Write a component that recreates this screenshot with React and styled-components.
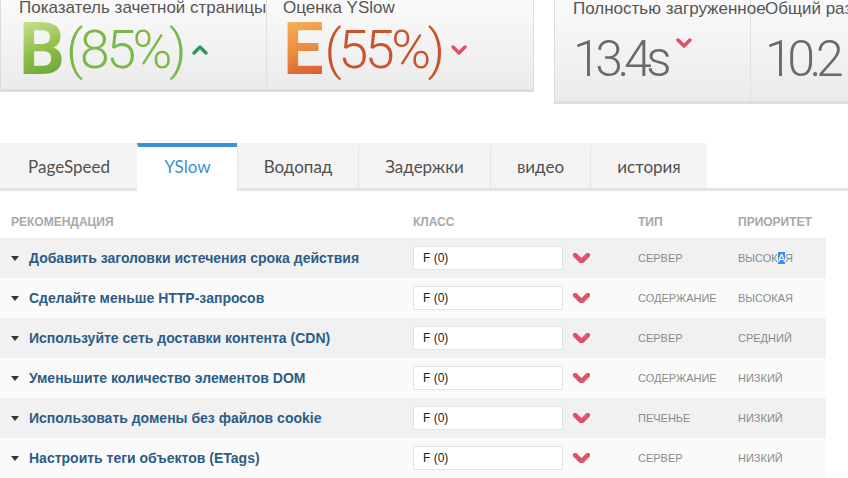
import React from "react";
import styled, { createGlobalStyle } from "styled-components";

const GlobalStyle = createGlobalStyle`
  html, body {
    margin: 0;
    padding: 0;
    background: #fff;
    overflow: hidden;
    font-family: "Liberation Sans", Arial, sans-serif;
  }
`;

const Page = styled.div`
  width: 848px;
  height: 478px;
  overflow: hidden;
`;

const ScoreRow = styled.div`
  display: flex;
  align-items: flex-start;
  gap: 20px;
  height: 104px;
`;

const Card = styled.div`
  display: flex;
  flex-shrink: 0;
  width: ${(p) => p.$width}px;
  height: ${(p) => p.$height}px;
  background: linear-gradient(#fafafa, #ebebeb);
  border: 1px solid #dcdcdc;
  border-top: none;
  border-bottom: 3px solid #dedede;
  box-sizing: border-box;
`;

const Cell = styled.div`
  width: ${(p) => p.$width}px;
  flex-shrink: 0;
  padding-left: ${(p) => p.$pad}px;
  box-sizing: border-box;
  border-right: ${(p) => (p.$divider ? "1px solid #e0e0e0" : "none")};
  white-space: nowrap;
`;

const CellTitle = styled.div`
  font-family: "Liberation Sans", Arial, sans-serif;
  font-size: 17px;
  line-height: 18px;
  margin-top: ${(p) => p.$top}px;
  color: #555;
`;

const Score = styled.div`
  display: flex;
  align-items: center;
  height: 60px;
  margin-top: ${(p) => p.$top}px;
`;

const Grade = styled.span`
  font-family: Roboto, "Open Sans", sans-serif;
  font-weight: 700;
  font-size: 72px;
  line-height: 60px;
  background: ${(p) => p.$gradient};
  -webkit-background-clip: text;
  background-clip: text;
  color: transparent;
`;

const Percent = styled.span`
  font-family: Roboto, "Open Sans", sans-serif;
  font-weight: 300;
  font-size: 54px;
  line-height: 60px;
  letter-spacing: -3.5px;
  margin-left: 1px;
  color: ${(p) => p.$color};
`;

const Timing = styled.span`
  font-family: Roboto, "Open Sans", sans-serif;
  font-weight: 300;
  font-size: 50px;
  line-height: 60px;
  letter-spacing: -5.5px;
  color: #6a6a6a;
`;

const Chevron = ({ up, color, size = 16, stroke = 3.5 }) => (
  <svg width={size} height={size * 0.62} viewBox="0 0 16 10">
    <polyline
      points={up ? "2,8 8,2 14,8" : "2,2 8,8 14,2"}
      fill="none"
      stroke={color}
      strokeWidth={stroke}
      strokeLinecap="round"
      strokeLinejoin="round"
    />
  </svg>
);

const Mark = styled.span`
  display: inline-flex;
  margin-left: ${(p) => p.$left}px;
  align-self: ${(p) => p.$align || "center"};
  margin-top: ${(p) => p.$top || 0}px;
`;

const TabBar = styled.div`
  display: flex;
  margin-top: 39px;
  height: 45px;
  border-bottom: 3px solid #e3e3e3;
`;

const Tab = styled.div`
  display: flex;
  align-items: center;
  justify-content: center;
  width: ${(p) => p.$width}px;
  box-sizing: border-box;
  font-family: Lato, "Open Sans", sans-serif;
  font-size: 17px;
  color: ${(p) => (p.$active ? "#3d8fd6" : "#505050")};
  background: ${(p) => (p.$active ? "#fff" : "#f4f4f4")};
  border-top: 4px solid ${(p) => (p.$active ? "#3d8fd6" : "#f4f4f4")};
  border-left: 1px solid ${(p) => (p.$active || p.$first ? "transparent" : "#e6e6e6")};
  height: ${(p) => (p.$active ? 48 : 45)}px;
  padding-bottom: ${(p) => (p.$active ? 5 : 2)}px;
`;

const Table = styled.div`
  width: 826px;
`;

const Grid = styled.div`
  display: grid;
  grid-template-columns: 402px 160px 65px 100px 88px;
  align-items: center;
  padding-left: 11px;
`;

const HeadRow = styled(Grid)`
  height: 47px;
  align-items: end;
  padding-bottom: 9px;
  box-sizing: border-box;
  font-size: 12px;
  line-height: 14px;
  font-weight: 700;
  color: #a8a8a8;
  text-transform: uppercase;
`;

const Row = styled(Grid)`
  height: 40px;
  background: ${(p) => (p.$odd ? "#f1f1f1" : "#fafafa")};
`;

const Rule = styled.div`
  display: flex;
  align-items: center;
  gap: 10px;
  font-size: 14px;
  font-weight: 700;
  color: #2b5d88;
  white-space: nowrap;
`;

const Caret = styled.span`
  width: 0;
  height: 0;
  border-left: 4px solid transparent;
  border-right: 4px solid transparent;
  border-top: 5px solid #333;
  margin-top: 1px;
`;

const GradeBox = styled.div`
  width: 150px;
  height: 24px;
  box-sizing: border-box;
  background: #fff;
  border: 1px solid #e2e2e2;
  padding-left: 9px;
  font-size: 12px;
  line-height: 22px;
  color: #222;
`;

const Small = styled.div`
  font-size: 11px;
  color: #8a8a8a;
  text-transform: uppercase;
  white-space: nowrap;
`;

const Selected = styled.span`
  background: #3c8ee3;
  color: #fff;
`;

const rules = [
  { name: "Добавить заголовки истечения срока действия", type: "сервер", prio: "высокая", sel: true },
  { name: "Сделайте меньше HTTP-запросов", type: "содержание", prio: "высокая" },
  { name: "Используйте сеть доставки контента (CDN)", type: "сервер", prio: "средний" },
  { name: "Уменьшите количество элементов DOM", type: "содержание", prio: "низкий" },
  { name: "Использовать домены без файлов cookie", type: "печенье", prio: "низкий" },
  { name: "Настроить теги объектов (ETags)", type: "сервер", prio: "низкий" },
];

const tabs = [
  { label: "PageSpeed", width: 137 },
  { label: "YSlow", width: 100, active: true },
  { label: "Водопад", width: 121 },
  { label: "Задержки", width: 132 },
  { label: "видео", width: 100 },
  { label: "история", width: 117 },
];

const Priority = ({ text, sel }) =>
  sel ? (
    <Small>
      ВЫСОК<Selected>А</Selected>Я
    </Small>
  ) : (
    <Small>{text}</Small>
  );

export default function App() {
  return (
    <Page>
      <GlobalStyle />
      <ScoreRow>
        <Card $width={534} $height={92}>
          <Cell $width={266} $pad={18} $divider>
            <CellTitle $top={-1}>Показатель зачетной страницы</CellTitle>
            <Score $top={3}>
              <Grade $gradient="linear-gradient(160deg, #cfe392 0%, #8fc04a 50%, #5e9f2e 100%)">B</Grade>
              <Percent $color="#7bb84a">(85%)</Percent>
              <Mark $left={9}>
                <Chevron up color="#2f9958" />
              </Mark>
            </Score>
          </Cell>
          <Cell $width={266} $pad={16}>
            <CellTitle $top={-1}>Оценка YSlow</CellTitle>
            <Score $top={3}>
              <Grade $gradient="linear-gradient(160deg, #f6b45e 0%, #ec8a3e 50%, #d5522a 100%)">E</Grade>
              <Percent $color="#c9532b">(55%)</Percent>
              <Mark $left={9}>
                <Chevron color="#e0506a" />
              </Mark>
            </Score>
          </Cell>
        </Card>
        <Card $width={310} $height={104}>
          <Cell $width={196} $pad={18} $divider>
            <CellTitle $top={0}>Полностью загруженное</CellTitle>
            <Score $top={11}>
              <Timing>13.4s</Timing>
              <Mark $left={10} $align="flex-start" $top={9}>
                <Chevron color="#e0506a" />
              </Mark>
            </Score>
          </Cell>
          <Cell $width={114} $pad={14}>
            <CellTitle $top={0}>Общий размер</CellTitle>
            <Score $top={11}>
              <Timing>10.2</Timing>
            </Score>
          </Cell>
        </Card>
      </ScoreRow>

      <TabBar>
        {tabs.map((t, i) => (
          <Tab key={t.label} $width={t.width} $active={t.active} $first={i === 0}>
            {t.label}
          </Tab>
        ))}
      </TabBar>

      <Table>
        <HeadRow>
          <div>Рекомендация</div>
          <div>Класс</div>
          <div />
          <div>Тип</div>
          <div>Приоритет</div>
        </HeadRow>
        {rules.map((r, i) => (
          <Row key={r.name} $odd={i % 2 === 0}>
            <Rule>
              <Caret />
              {r.name}
            </Rule>
            <GradeBox>F (0)</GradeBox>
            <Chevron color="#e2506a" size={17} stroke={4.5} />
            <Small>{r.type}</Small>
            <Priority text={r.prio} sel={r.sel} />
          </Row>
        ))}
      </Table>
    </Page>
  );
}
